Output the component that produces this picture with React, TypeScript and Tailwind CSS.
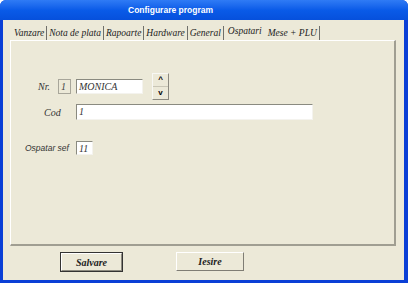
import React from "react";

const tabs = ["Vanzare", "Nota de plata", "Rapoarte", "Hardware", "General", "Ospatari", "Mese + PLU"];

const serif = "font-['Liberation_Serif',serif] italic";

const Field = ({ value, className }: { value: string; className: string }) => (
  <div
    className={`bg-white border-t border-l border-t-[#8a8a80] border-l-[#8a8a80] border-b border-r border-b-[#f4f3ee] border-r-[#f4f3ee] pl-[2px] text-[10px] leading-[13px] text-[#333] ${serif} ${className}`}
  >
    {value}
  </div>
);

const App = () => {
  return (
    <div className="w-[408px] h-[283px] bg-[#0a3fd6] rounded-t-[6px] flex flex-col overflow-hidden">
      {/* TITLE BAR */}
      <div className="h-[20px] shrink-0 bg-gradient-to-b from-[#2f7bf5] via-[#0a5be8] to-[#0650dc] pl-[128px] flex items-center">
        <span className="font-['Liberation_Sans',sans-serif] font-bold text-[8.5px] leading-[10px] text-white">
          Configurare program
        </span>
      </div>

      {/* BODY */}
      <div className="flex-1 ml-[3px] mb-[3px] mr-[4px] bg-[#ece9d8] flex flex-col">
        {/* TABS */}
        <div className="flex items-end h-[20px] pl-[9px]">
          {tabs.map((t) => {
            const active = t === "Ospatari";
            return (
              <div
                key={t}
                className={`${serif} text-[9.5px] leading-[14px] text-[#222] ${
                  active
                    ? "px-[4px] h-[17px] pt-[1px]"
                    : "px-[2px] h-[14px] border-r border-r-[#6f6f6a]"
                }`}
              >
                {t}
              </div>
            );
          })}
        </div>

        {/* PANEL */}
        <div className="mx-[7px] w-[386px] h-[206px] border-l border-t border-l-white border-t-white border-r-2 border-b-2 border-r-[#a09e92] border-b-[#a09e92] flex flex-col">
          <div className="flex items-center pt-[32px] pl-[27px]">
            <span className={`${serif} text-[10px] text-[#333] w-[20px]`}>Nr.</span>
            <div className="w-[13px] h-[15px] border border-[#a8a69a] bg-[#ece9d8] text-[10px] leading-[13px] pl-[2px] text-[#444] font-['Liberation_Serif',serif] italic">
              1
            </div>
            <Field value="MONICA" className="ml-[5px] w-[67px] h-[15px]" />
            <div className="ml-[9px] w-[17px] h-[27px] flex flex-col border border-[#f8f8f4] border-r-[#8c8a80] border-b-[#8c8a80] bg-[#ece9d8]">
              <div className="flex-1 flex items-center justify-center text-[8px] font-bold font-['Liberation_Sans',sans-serif] border-b border-b-[#c9c6b6]">
                ^
              </div>
              <div className="flex-1 flex items-center justify-center text-[8px] font-bold font-['Liberation_Sans',sans-serif]">
                v
              </div>
            </div>
          </div>

          <div className="flex items-center mt-[4px] pl-[33px]">
            <span className={`${serif} text-[10px] text-[#333] w-[32px]`}>Cod</span>
            <Field value="1" className="w-[237px] h-[16px]" />
          </div>

          <div className="flex items-center mt-[21px] pl-[14px]">
            <span className="font-['Liberation_Sans',sans-serif] italic text-[8.5px] text-[#333] w-[51px]">
              Ospatar sef
            </span>
            <Field value="11" className="w-[17px] h-[14px]" />
          </div>
        </div>

        {/* BUTTONS */}
        <div className="flex items-start pt-[6px] pl-[57px] gap-[53px]">
          <button className="w-[63px] h-[20px] border border-[#333] bg-[#ece9d8] flex items-center justify-center">
            <div className="w-full h-full border border-white border-r-[#8c8a80] border-b-[#8c8a80] flex items-center justify-center">
              <span className="font-['Liberation_Serif',serif] italic font-bold text-[10px] text-[#222]">Salvare</span>
            </div>
          </button>
          <button className="w-[68px] h-[19px] border border-white border-r-[#7f7d74] border-b-[#7f7d74] bg-[#ece9d8] flex items-center justify-center">
            <span className="font-['Liberation_Serif',serif] italic font-bold text-[10px] text-[#222]">Iesire</span>
          </button>
        </div>
      </div>
    </div>
  );
};

export default App;
